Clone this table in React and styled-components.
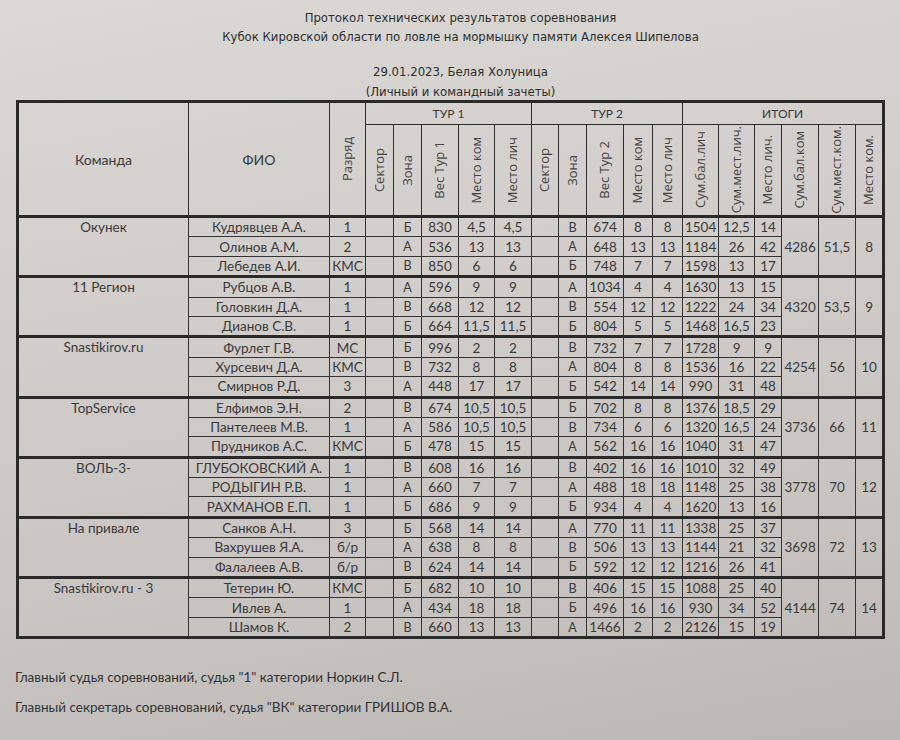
import React from 'react';
import styled, { createGlobalStyle } from 'styled-components';

const Global = createGlobalStyle`
    html, body { margin: 0; padding: 0; }
    body { background: #cbc8c5; }
`;

const Page = styled.div`
    width: 900px;
    height: 740px;
    overflow: hidden;
    box-sizing: border-box;
    padding: 8px 0 0 16px;
    background: linear-gradient(170deg, #dbd9d6 0%, #d0cdca 40%, #c6c3c0 75%, #bab7b4 100%);
    color: #333;
    font-family: Lato, "Open Sans", sans-serif;
`;

const Titles = styled.div`
    width: 865px;
    padding-left: 24px;
    box-sizing: border-box;
    text-align: center;
    font-family: "Liberation Sans Narrow", "DejaVu Sans Condensed", sans-serif;
    font-stretch: condensed;
    font-size: 13px;
    color: #2e2e2e;
`;

const TitleLine = styled.div`
    line-height: ${p => p.lh || 19}px;
    margin-top: ${p => p.gap || 0}px;
`;

const Sheet = styled.table`
    width: 866px;
    table-layout: fixed;
    border-collapse: collapse;
    border: 3px solid #2a2a2a;
    font-size: 13px;
    color: #3a3a3a;
`;

const HeadCell = styled.th`
    border: 1px solid #2e2e2e;
    border-bottom: ${p => p.last ? '3px solid #2a2a2a' : '1px solid #2e2e2e'};
    font-weight: normal;
    font-size: ${p => p.big ? 14 : 12}px;
    line-height: 21px;
    padding: 0;
    text-align: center;
    vertical-align: middle;
`;

const VertBox = styled.div`
    height: 90px;
    display: flex;
    align-items: center;
    justify-content: center;
    overflow: hidden;
`;

const Vert = styled.span`
    writing-mode: vertical-rl;
    transform: rotate(180deg);
    font-family: "Open Sans", sans-serif;
    font-size: 13px;
    line-height: 1.2;
    color: #444;
    white-space: nowrap;
`;

const Cell = styled.td`
    border: 1px solid #333;
    border-top: ${p => p.first ? '3px solid #2a2a2a' : '1px solid #333'};
    height: 18.4px;
    padding: 0;
    text-align: center;
    vertical-align: middle;
    white-space: nowrap;
    overflow: hidden;
    font-size: ${p => p.small ? 12.5 : 13.5}px;
`;

const TeamCell = styled.td`
    border: 1px solid #333;
    border-top: 3px solid #2a2a2a;
    padding: 1px 0 0;
    text-align: center;
    vertical-align: top;
    font-size: 13.5px;
`;

const TotalCell = styled.td`
    border: 1px solid #333;
    border-top: 3px solid #2a2a2a;
    padding: 0;
    text-align: center;
    vertical-align: middle;
    font-size: 13.5px;
`;

const Footer = styled.div`
    padding-top: 23px;
    font-size: 13.5px;
    color: #333;
`;

const FooterLine = styled.div`
    line-height: 30px;
    margin-left: -1px;
`;

const widths = [171, 141, 36, 28, 28, 37, 36, 37, 27, 28, 37, 29, 30, 36, 36, 27, 37, 37, 28];

const teams = [
    { name: 'Окунек', total: ['4286', '51,5', '8'], rows: [
        ['Кудрявцев А.А.', '1', 'Б', '830', '4,5', '4,5', 'В', '674', '8', '8', '1504', '12,5', '14'],
        ['Олинов А.М.', '2', 'А', '536', '13', '13', 'А', '648', '13', '13', '1184', '26', '42'],
        ['Лебедев А.И.', 'КМС', 'В', '850', '6', '6', 'Б', '748', '7', '7', '1598', '13', '17'],
    ] },
    { name: '11 Регион', total: ['4320', '53,5', '9'], rows: [
        ['Рубцов А.В.', '1', 'А', '596', '9', '9', 'А', '1034', '4', '4', '1630', '13', '15'],
        ['Головкин Д.А.', '1', 'В', '668', '12', '12', 'В', '554', '12', '12', '1222', '24', '34'],
        ['Дианов С.В.', '1', 'Б', '664', '11,5', '11,5', 'Б', '804', '5', '5', '1468', '16,5', '23'],
    ] },
    { name: 'Snastikirov.ru', total: ['4254', '56', '10'], rows: [
        ['Фурлет Г.В.', 'МС', 'Б', '996', '2', '2', 'В', '732', '7', '7', '1728', '9', '9'],
        ['Хурсевич Д.А.', 'КМС', 'В', '732', '8', '8', 'А', '804', '8', '8', '1536', '16', '22'],
        ['Смирнов Р.Д.', '3', 'А', '448', '17', '17', 'Б', '542', '14', '14', '990', '31', '48'],
    ] },
    { name: 'TopService', total: ['3736', '66', '11'], rows: [
        ['Елфимов Э.Н.', '2', 'В', '674', '10,5', '10,5', 'Б', '702', '8', '8', '1376', '18,5', '29'],
        ['Пантелеев М.В.', '1', 'А', '586', '10,5', '10,5', 'В', '734', '6', '6', '1320', '16,5', '24'],
        ['Прудников А.С.', 'КМС', 'Б', '478', '15', '15', 'А', '562', '16', '16', '1040', '31', '47'],
    ] },
    { name: 'ВОЛЬ-3-', total: ['3778', '70', '12'], rows: [
        ['ГЛУБОКОВСКИЙ А.', '1', 'В', '608', '16', '16', 'В', '402', '16', '16', '1010', '32', '49'],
        ['РОДЫГИН Р.В.', '1', 'А', '660', '7', '7', 'А', '488', '18', '18', '1148', '25', '38'],
        ['РАХМАНОВ Е.П.', '1', 'Б', '686', '9', '9', 'Б', '934', '4', '4', '1620', '13', '16'],
    ] },
    { name: 'На привале', total: ['3698', '72', '13'], rows: [
        ['Санков А.Н.', '3', 'Б', '568', '14', '14', 'А', '770', '11', '11', '1338', '25', '37'],
        ['Вахрушев Я.А.', 'б/р', 'А', '638', '8', '8', 'В', '506', '13', '13', '1144', '21', '32'],
        ['Фалалеев А.В.', 'б/р', 'В', '624', '14', '14', 'Б', '592', '12', '12', '1216', '26', '41'],
    ] },
    { name: 'Snastikirov.ru - 3', total: ['4144', '74', '14'], rows: [
        ['Тетерин Ю.', 'КМС', 'Б', '682', '10', '10', 'В', '406', '15', '15', '1088', '25', '40'],
        ['Ивлев А.', '1', 'А', '434', '18', '18', 'Б', '496', '16', '16', '930', '34', '52'],
        ['Шамов К.', '2', 'В', '660', '13', '13', 'А', '1466', '2', '2', '2126', '15', '19'],
    ] },
];

const tourHeads = ['Сектор', 'Зона', 'Вес Тур 1', 'Место ком', 'Место лич', 'Сектор', 'Зона', 'Вес Тур 2', 'Место ком', 'Место лич'];
const totalHeads = ['Сум.бал.лич', 'Сум.мест.лич.', 'Место лич.', 'Сум.бал.ком', 'Сум.мест.ком.', 'Место ком.'];

function PlayerRow({ team, row, first })
{
    let [fio, rank, z1, w1, mk1, ml1, z2, w2, mk2, ml2, sbl, sml, ml] = row;
    let cells = [rank, '', z1, w1, mk1, ml1, '', z2, w2, mk2, ml2, sbl, sml, ml];

    return (
        <tr>
            {first && <TeamCell rowSpan={3}>{team.name}</TeamCell>}
            <Cell first={first}>{fio}</Cell>
            {cells.map((c, i) => <Cell key={i} first={first} small={i === 2 || i === 7}>{c}</Cell>)}
            {first && team.total.map((t, i) => <TotalCell key={'t' + i} rowSpan={3}>{t}</TotalCell>)}
        </tr>
    );
}

export default function App()
{
    return (
        <Page>
            <Global />
            <Titles>
                <TitleLine>Протокол технических результатов соревнования</TitleLine>
                <TitleLine>Кубок Кировской области по ловле на мормышку памяти Алексея Шипелова</TitleLine>
                <TitleLine gap={16}>29.01.2023, Белая Холуница</TitleLine>
                <TitleLine lh={16} gap={3}>(Личный и командный зачеты)</TitleLine>
            </Titles>
            <Sheet>
                <colgroup>
                    {widths.map((w, i) => <col key={i} style={{ width: w }} />)}
                </colgroup>
                <thead>
                    <tr>
                        <HeadCell rowSpan={2} big last>Команда</HeadCell>
                        <HeadCell rowSpan={2} big last>ФИО</HeadCell>
                        <HeadCell rowSpan={2} last><VertBox><Vert>Разряд</Vert></VertBox></HeadCell>
                        <HeadCell colSpan={5}>ТУР 1</HeadCell>
                        <HeadCell colSpan={5}>ТУР 2</HeadCell>
                        <HeadCell colSpan={6}>ИТОГИ</HeadCell>
                    </tr>
                    <tr>
                        {tourHeads.concat(totalHeads).map((h, i) => <HeadCell key={i} last><VertBox><Vert>{h}</Vert></VertBox></HeadCell>)}
                    </tr>
                </thead>
                <tbody>
                    {
                        teams.map(t => t.rows.map((r, i) => <PlayerRow key={t.name + i} team={t} row={r} first={i === 0} />))
                    }
                </tbody>
            </Sheet>
            <Footer>
                <FooterLine>Главный судья соревнований, судья "1" категории Норкин С.Л.</FooterLine>
                <FooterLine>Главный секретарь соревнований, судья "ВК" категории ГРИШОВ В.А.</FooterLine>
            </Footer>
        </Page>
    );
}
